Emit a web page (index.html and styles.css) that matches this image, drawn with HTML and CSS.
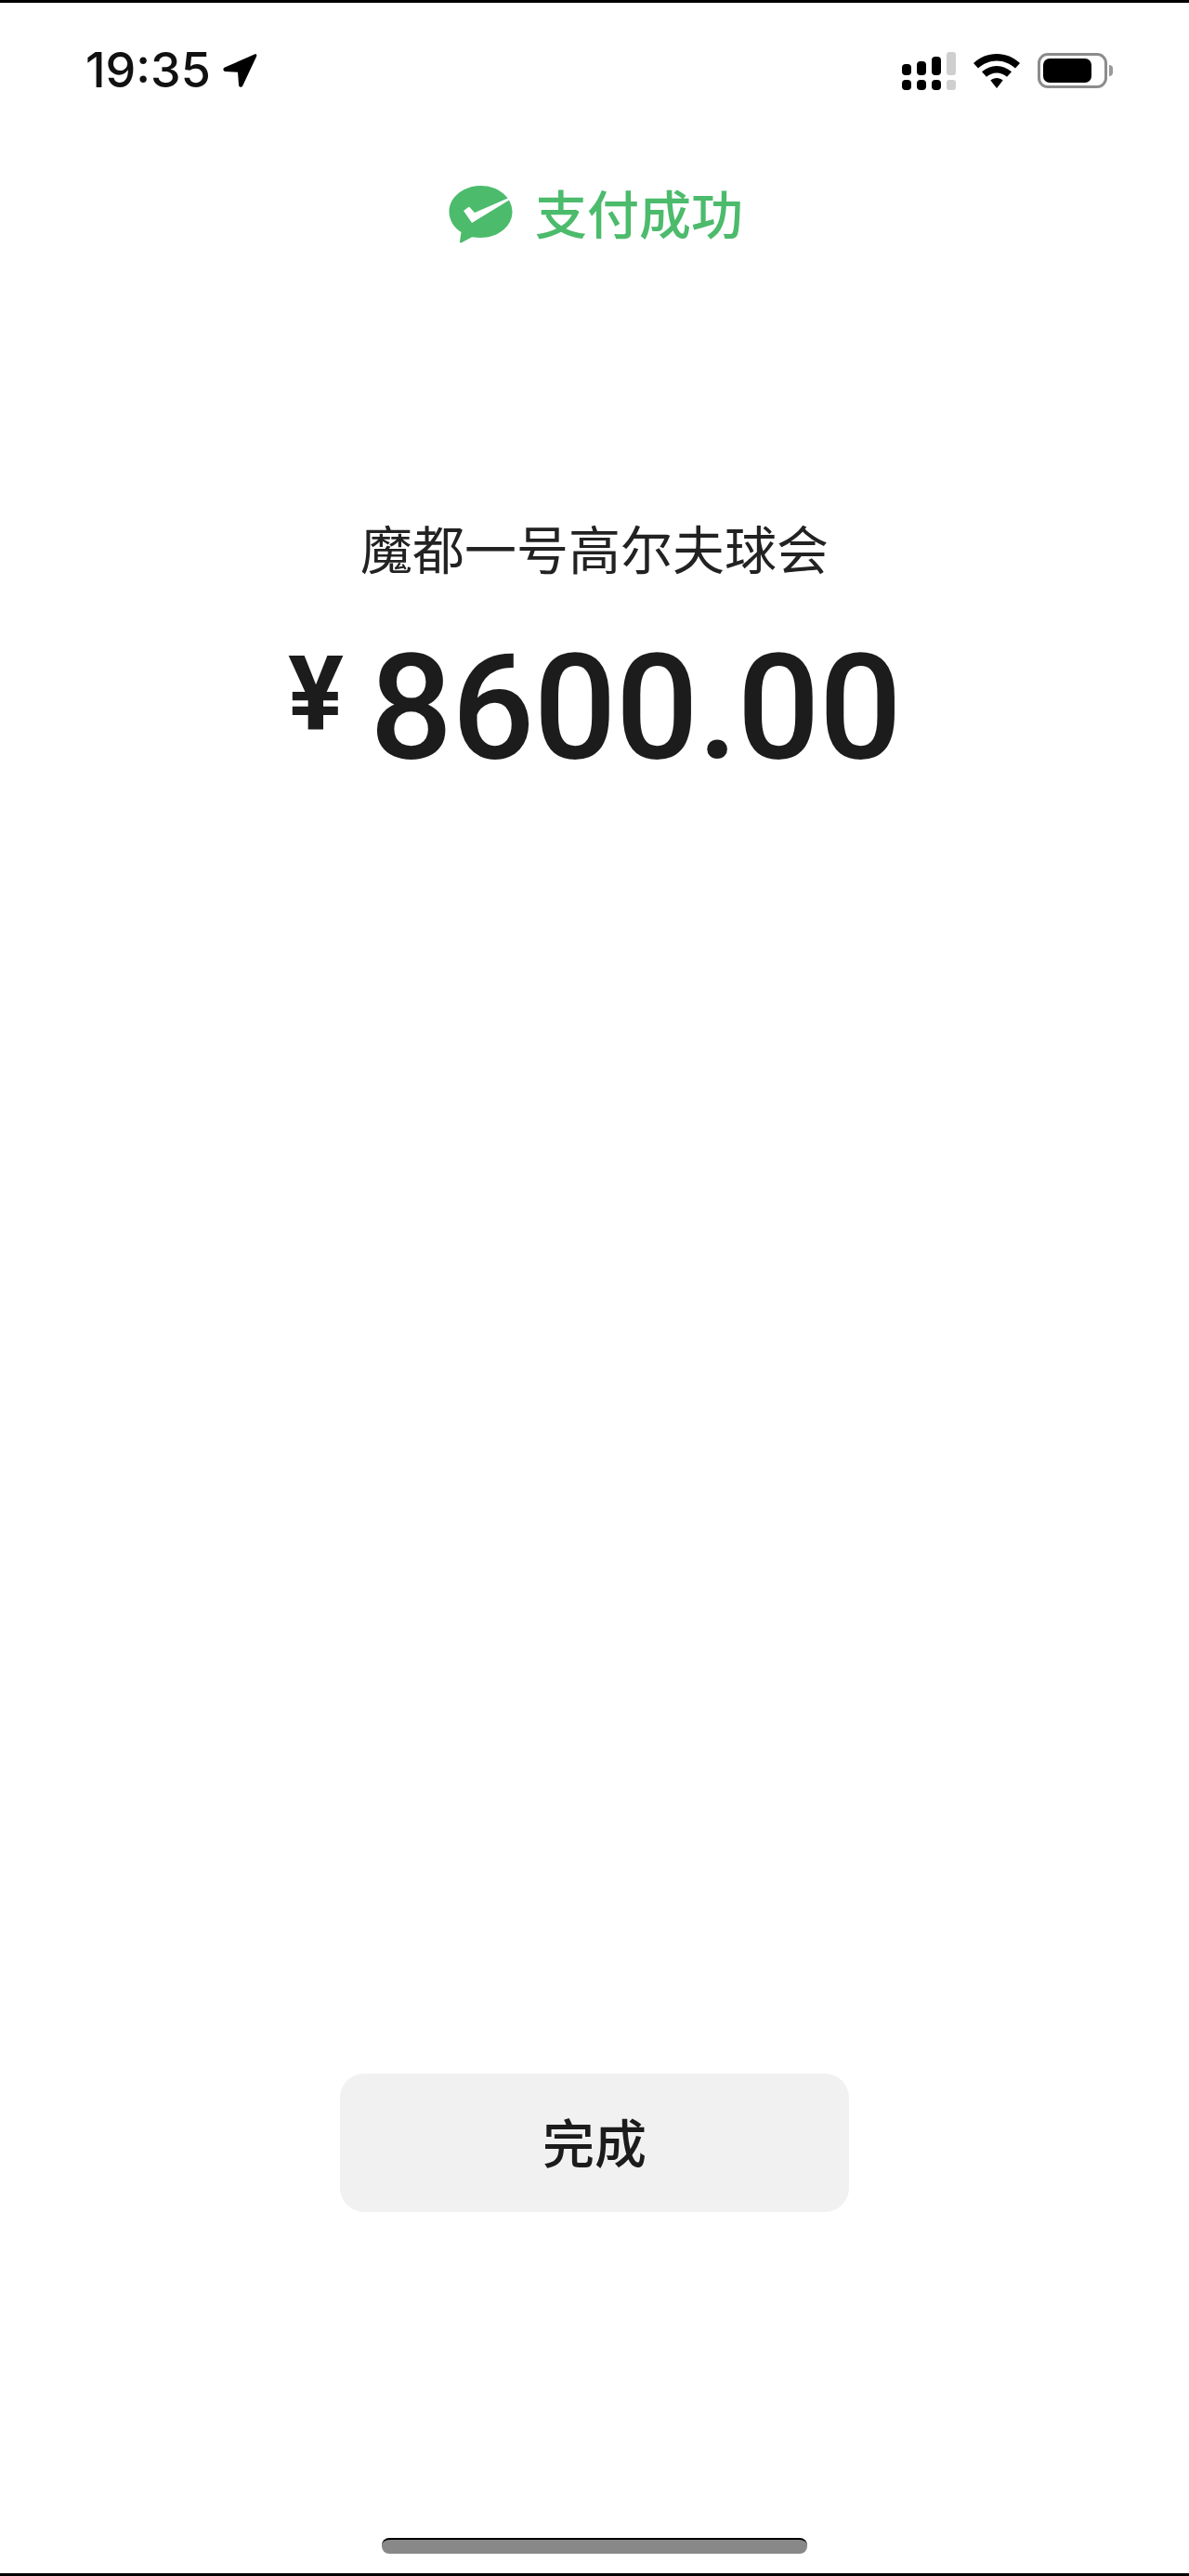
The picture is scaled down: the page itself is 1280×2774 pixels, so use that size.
FILE: index.html
```html
<!DOCTYPE html>
<html lang="zh-CN">
<head>
    <meta charset="UTF-8">
    <meta name="viewport" content="width=device-width, initial-scale=1.0">
    <title>支付成功</title>
    <link rel="stylesheet" href="styles.css">
</head>
<body>
    <div class="page">
        <header class="status-bar">
            <div class="status-left">
                <span class="time">19:35</span>
                <svg class="icon-location" viewBox="0 0 38 38"><path d="M35 1.5 L3 15.5 C.5 16.8 1 19.8 3.8 20 L17 20.8 L18 34.5 C18.3 37 21 37.6 22.3 35.2 L37 4 C37.9 1.8 36.8 .8 35 1.5 Z"/></svg>
            </div>
            <div class="status-right">
                <svg class="icon-signal" viewBox="0 0 58 41">
                    <rect x="0" y="13" width="10" height="12" rx="4"/>
                    <rect x="16" y="10" width="10" height="15" rx="4"/>
                    <rect x="32" y="5" width="10" height="20" rx="4"/>
                    <rect x="48" y="0" width="10" height="25" rx="3" fill="#cfcfcf"/>
                    <rect x="0" y="30" width="10" height="11" rx="4"/>
                    <rect x="16" y="30" width="10" height="11" rx="4"/>
                    <rect x="32" y="30" width="10" height="11" rx="4"/>
                    <rect x="48" y="30" width="10" height="11" rx="3" fill="#cfcfcf"/>
                </svg>
                <svg class="icon-wifi" viewBox="0 0 50 37">
                    <path d="M25 0 C15.5 0 7 3.6 0 10 L5 15.5 C10.5 10.5 17.5 7.5 25 7.5 C32.5 7.5 39.5 10.5 45 15.5 L50 10 C43 3.6 34.5 0 25 0 Z"/>
                    <path d="M25 13 C19 13 13.5 15.4 9 19.3 L14 24.8 C17 22.2 20.8 20.6 25 20.6 C29.2 20.6 33 22.2 36 24.8 L41 19.3 C36.5 15.4 31 13 25 13 Z"/>
                    <path d="M25 26 C22.5 26 20.2 27 18.3 28.6 L25 37 L31.7 28.6 C29.8 27 27.5 26 25 26 Z"/>
                </svg>
                <div class="battery">
                    <div class="battery-body"><div class="battery-level"></div></div>
                    <div class="battery-tip"></div>
                </div>
            </div>
        </header>

        <div class="pay-title">
            <svg class="icon-wepay" viewBox="0 0 69 62">
                <path fill="#4cbb6c" d="M34.5 0 C15.5 0 .5 12.5 .5 28 C.5 37 5.5 45 13.5 50 L12 60 C12 61.5 13 62 14.5 61 L25 55.2 C28 55.8 31.2 56 34.5 56 C53.5 56 68.5 43.5 68.5 28 C68.5 12.5 53.5 0 34.5 0 Z"/>
                <path fill="#fff" d="M16 27 L22 22.5 L28 29 L67 12 L67.5 14 L25 40 Z"/>
            </svg>
            <span class="pay-status">支付成功</span>
        </div>

        <div class="merchant">魔都一号高尔夫球会</div>

        <div class="amount">
            <span class="currency">¥</span>
            <span class="value">8600.00</span>
        </div>

        <button class="done-btn">完成</button>

        <div class="home-bar"></div>
    </div>
</body>
</html>
```

FILE: styles.css
```css
body {
    margin: 0;
    padding: 0;
    background-color: #fff;
    font-family: "Noto Sans CJK SC", "Noto Sans", sans-serif;
}
.page {
    box-sizing: border-box;
    height: 2774px;
    display: flex;
    flex-direction: column;
    align-items: center;
    border-top: 3px solid #000;
    border-bottom: 3px solid #000;
    overflow: hidden;
}
.status-bar {
    box-sizing: border-box;
    width: 100%;
    height: 44px;
    margin-top: 51px;
    padding: 0 82px 0 92px;
    display: flex;
    justify-content: space-between;
    align-items: center;
}
.status-left {
    display: flex;
    align-items: center;
    gap: 12px;
}
.time {
    font-family: Inter, sans-serif;
    font-size: 52px;
    font-weight: 500;
    line-height: 44px;
    color: #111;
}
.icon-location {
    width: 38px;
    height: 38px;
    fill: #000;
}
.status-right {
    display: flex;
    align-items: center;
    gap: 19px;
}
.icon-signal {
    width: 58px;
    height: 41px;
    fill: #000;
}
.icon-wifi {
    width: 50px;
    height: 37px;
    fill: #000;
}
.battery {
    display: flex;
    align-items: center;
    gap: 2px;
}
.battery-body {
    box-sizing: border-box;
    width: 75px;
    height: 38px;
    padding: 3px;
    border: 3px solid #8c8c8c;
    border-radius: 11px;
}
.battery-level {
    width: 52px;
    height: 100%;
    background-color: #000;
    border-radius: 7px;
}
.battery-tip {
    width: 4px;
    height: 12px;
    background-color: #999;
    border-radius: 0 4px 4px 0;
}
.pay-title {
    height: 70px;
    margin-top: 98px;
    margin-left: 3px;
    display: flex;
    align-items: center;
    gap: 24px;
}
.icon-wepay {
    width: 69px;
    height: 62px;
}
.pay-status {
    font-size: 56px;
    font-weight: 500;
    color: #4cbb6c;
    line-height: 70px;
    margin-top: -6px;
}
.merchant {
    height: 80px;
    margin-top: 283px;
    font-size: 56px;
    font-weight: 400;
    line-height: 80px;
    color: #222;
}
.amount {
    height: 160px;
    margin-top: 48px;
    display: flex;
    align-items: center;
    gap: 28px;
    color: #1c1c1c;
    font-family: Roboto, sans-serif;
}
.currency {
    font-size: 112px;
    font-weight: 700;
    line-height: 160px;
    margin-top: -20px;
}
.value {
    font-size: 157px;
    font-weight: 500;
    line-height: 160px;
    letter-spacing: -1px;
    margin-top: 10px;
}
.done-btn {
    width: 548px;
    height: 149px;
    padding: 0 0 6px;
    margin-top: auto;
    background-color: #f1f1f1;
    color: #1c1c1c;
    border: none;
    border-radius: 26px;
    font-family: inherit;
    font-size: 56px;
    font-weight: 500;
}
.home-bar {
    box-sizing: border-box;
    width: 458px;
    height: 17px;
    margin-top: 351px;
    margin-bottom: 21px;
    background-color: #888;
    border-top: 2px solid #000;
    border-radius: 8px;
}
```
